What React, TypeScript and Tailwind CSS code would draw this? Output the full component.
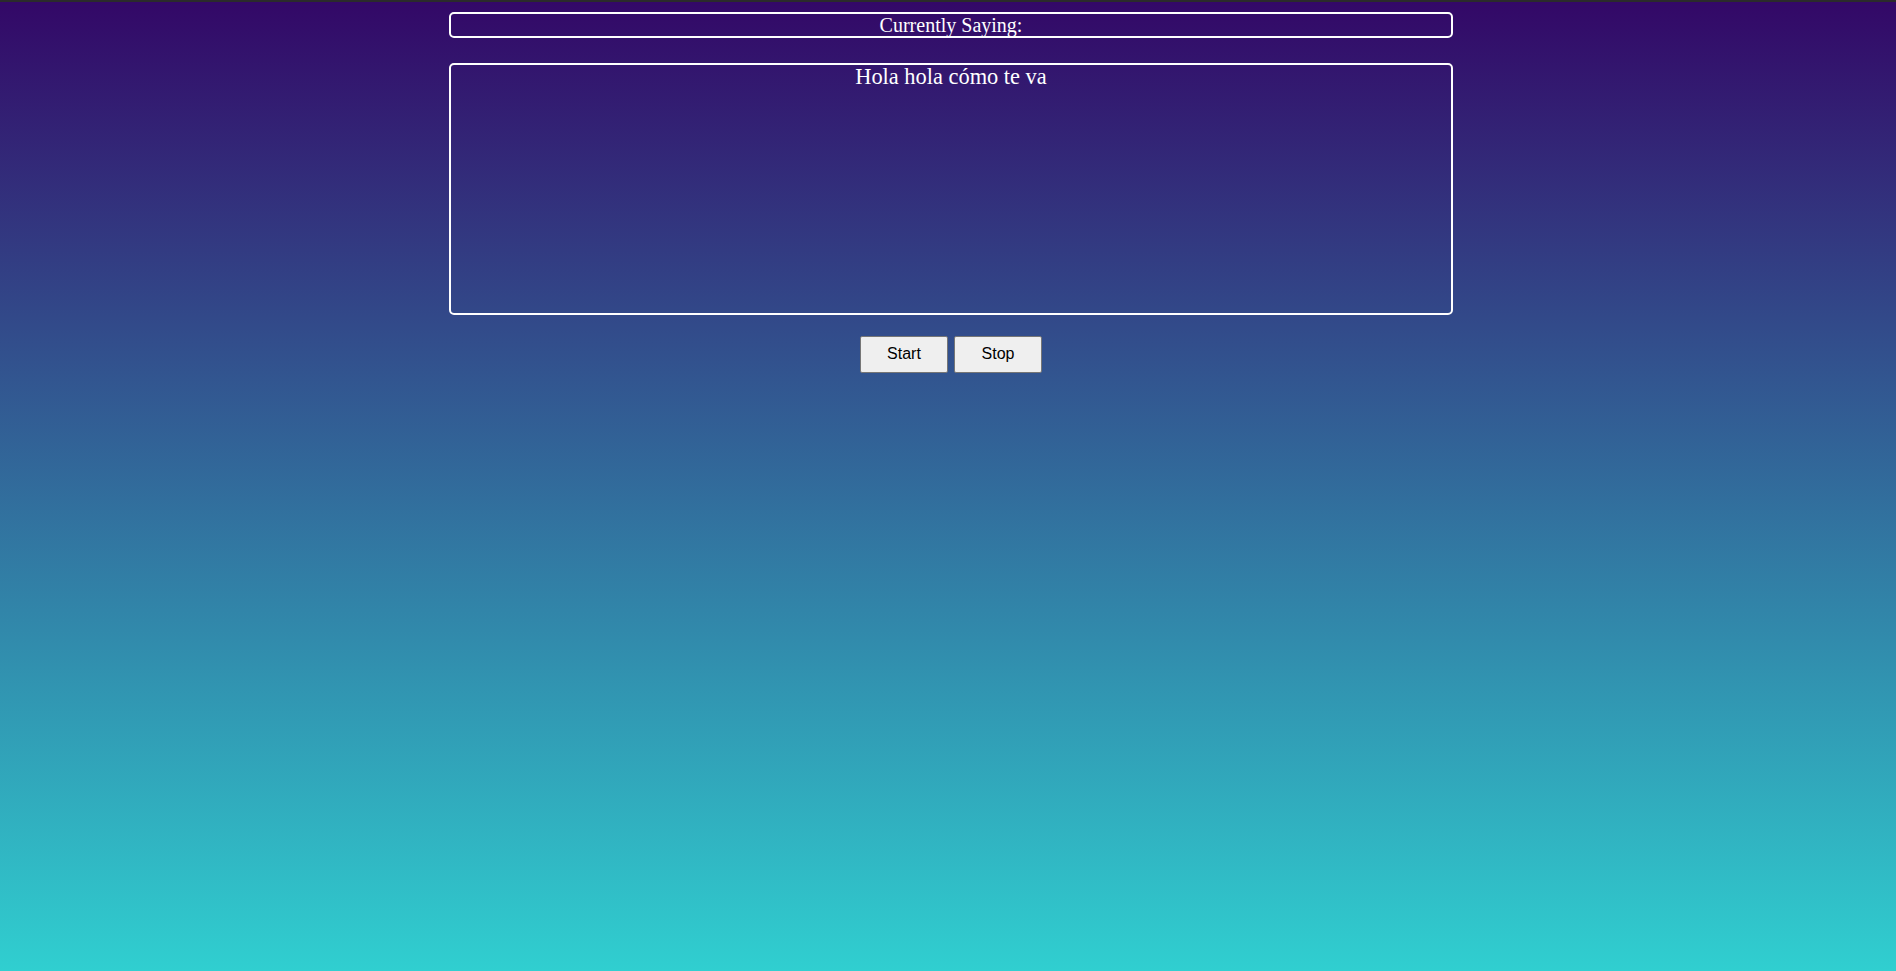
import React from 'react'

const App = () => {
  return (
    <div className="h-screen flex flex-col bg-[linear-gradient(to_bottom,#330867,#30cfd0)] border-t-2 border-[#2b2b2b]">
      <div className="flex flex-col items-center pl-[6px] pt-[10px]" style={{ fontFamily: '"Liberation Serif", "Times New Roman", serif' }}>
        <div className="w-[1004px] h-[26px] border-2 border-white rounded-[5px] text-white text-[20px] leading-[22px] text-center">
          Currently Saying:
        </div>
        <div className="w-[1004px] h-[252px] mt-[25px] border-2 border-white rounded-[5px] text-white text-[22.4px] leading-[24px] text-center">
          Hola hola cómo te va
        </div>
        <div className="flex gap-[6px] mt-[21px]">
          <button className="w-[88px] h-[37px] bg-[#efefef] border border-[#767676] rounded-[2px] text-black text-[16px] leading-[32px] pb-[1px]" style={{ fontFamily: '"Liberation Sans", Arial, sans-serif' }}>
            Start
          </button>
          <button className="w-[88px] h-[37px] bg-[#efefef] border border-[#767676] rounded-[2px] text-black text-[16px] leading-[32px] pb-[1px]" style={{ fontFamily: '"Liberation Sans", Arial, sans-serif' }}>
            Stop
          </button>
        </div>
      </div>
    </div>
  )
}

export default App
